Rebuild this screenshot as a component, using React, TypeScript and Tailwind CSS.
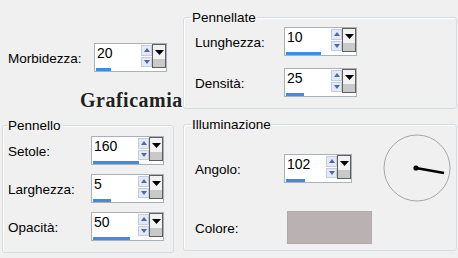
import React from "react";

type SpinProps = {
  value: string;
  barClass: string;
  widthClass?: string;
};

// piccolo pulsante freccia su/giù
function SpinArrow({ up = false }: { up?: boolean }) {
  return (
    <div className="flex flex-1 items-center justify-center border border-[#c3cde0] bg-[#e4eaf4]">
      <svg width="6" height="4" viewBox="0 0 6 4">
        {up ? <polygon points="0,4 6,4 3,0" fill="#4f67a6" /> : <polygon points="0,0 6,0 3,4" fill="#4f67a6" />}
      </svg>
    </div>
  );
}

function Spin({ value, barClass, widthClass = "w-[73px]" }: SpinProps) {
  return (
    <div className={`flex h-[29px] flex-col border border-[#a9b0b8] bg-white ${widthClass}`}>
      <div className="flex flex-1">
        <div className="flex-1 pl-[2px] pt-[1px] text-[14px] leading-[16px] text-black">{value}</div>
        <div className="flex w-[11px] flex-col gap-px py-px">
          <SpinArrow up />
          <SpinArrow />
        </div>
        <div className="flex w-[14px] flex-col border border-[#5e5e5e]">
          <div className="flex h-[14px] items-center justify-center bg-[#f2f2f2]">
            <svg width="9" height="5" viewBox="0 0 9 5">
              <polygon points="0,0 9,0 4.5,5" fill="#000" />
            </svg>
          </div>
          <div className="flex-1 bg-[#c9c9c9]" />
        </div>
      </div>
      <div className="h-[3px] pl-px">
        <div className={`h-full bg-[#3b8ee2] ${barClass}`} />
      </div>
    </div>
  );
}

function Group({ title, legendClass, className, children }: { title: string; legendClass: string; className: string; children: React.ReactNode }) {
  return (
    <fieldset className={`rounded-[3px] border border-[#d6dce1] shadow-[inset_1px_1px_0_#ffffff] ${className}`}>
      <legend className={`px-px text-[13.5px] leading-[15px] text-black ${legendClass}`}>{title}</legend>
      {children}
    </fieldset>
  );
}

export default function App() {
  return (
    <div className="flex h-[258px] w-[458px] overflow-hidden bg-[#f0f0f0] font-['Liberation_Sans',Arial,sans-serif] text-[13.5px] text-black">
      {/* colonna sinistra */}
      <div className="flex w-[180px] flex-col">
        <div className="flex h-[118px] flex-col">
          <div className="mt-[43px] flex items-center pl-[8px]">
            <span className="w-[86px] pt-[3px]">Morbidezza:</span>
            <Spin value="20" barClass="w-[15px]" />
          </div>
          <div className="mt-[17px] pl-[80px] font-['Liberation_Serif',serif] text-[20px] font-bold leading-[22px] tracking-[0.5px] text-[#222] [text-shadow:1px_1px_0_#ffffff]">
            Graficamia
          </div>
        </div>
        <Group title="Pennello" legendClass="ml-[4px]" className="ml-[2px] h-[135px] w-[172px]">
          <div className="flex flex-col gap-[9px] pl-[5px] pt-[3px]">
            <div className="flex items-center">
              <span className="w-[83px] pt-[3px]">Setole:</span>
              <Spin value="160" barClass="w-[46px]" />
            </div>
            <div className="flex items-center">
              <span className="w-[83px] pt-[3px]">Larghezza:</span>
              <Spin value="5" barClass="w-[18px]" />
            </div>
            <div className="flex items-center">
              <span className="w-[83px] pt-[3px]">Opacità:</span>
              <Spin value="50" barClass="w-[37px]" />
            </div>
          </div>
        </Group>
      </div>

      {/* colonna destra */}
      <div className="flex flex-col pl-[3px]">
        <Group title="Pennellate" legendClass="ml-[7px]" className="mt-[10px] h-[99px] w-[274px]">
          <div className="flex flex-col gap-[12px] pl-[11px] pt-[2px]">
            <div className="flex items-center">
              <span className="w-[89px] pt-[3px]">Lunghezza:</span>
              <Spin value="10" barClass="w-[35px]" />
            </div>
            <div className="flex items-center">
              <span className="w-[89px] pt-[3px]">Densità:</span>
              <Spin value="25" barClass="w-[18px]" />
            </div>
          </div>
        </Group>
        <Group title="Illuminazione" legendClass="ml-[7px]" className="mt-[8px] h-[134px] w-[274px]">
          <div className="flex pl-[11px]">
            <div className="flex flex-col pt-[22px]">
              <div className="flex items-center">
                <span className="w-[89px] pt-[3px]">Angolo:</span>
                <Spin value="102" barClass="w-[19px]" widthClass="w-[68px]" />
              </div>
              <div className="mt-[28px] flex items-center">
                <span className="w-[92px] pt-[3px]">Colore:</span>
                <div className="h-[33px] w-[85px] border border-[#b2a9a9] bg-[#bab2b2]" />
              </div>
            </div>
            <div className="ml-[11px] mt-[2px]">
              <svg width="68" height="68" viewBox="0 0 68 68">
                <circle cx="34" cy="34" r="33" fill="none" stroke="#a6a6a6" strokeWidth="1" />
                <line x1="33" y1="34" x2="61" y2="39" stroke="#000" strokeWidth="2.4" />
                <circle cx="33" cy="34" r="2.6" fill="#000" />
              </svg>
            </div>
          </div>
        </Group>
      </div>
    </div>
  );
}
